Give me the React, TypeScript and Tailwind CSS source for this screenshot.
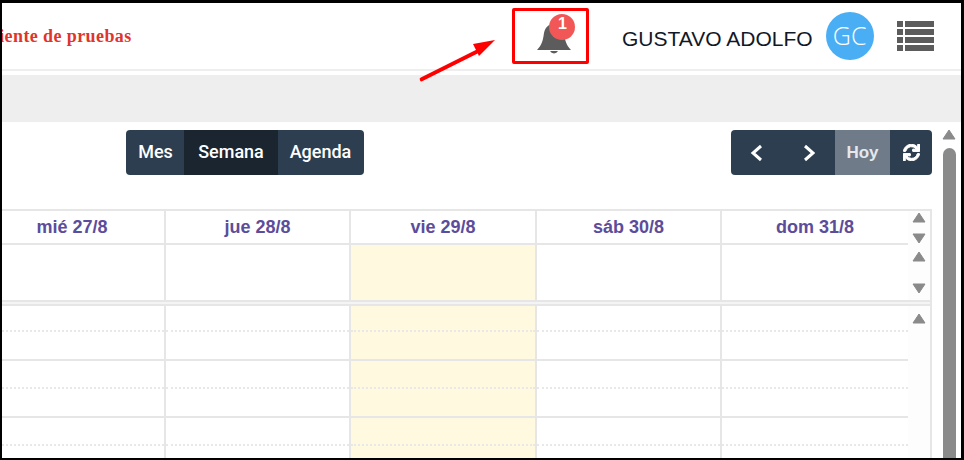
import React from "react";
import { FaSync } from "react-icons/fa";

const days = ["mié 27/8", "jue 28/8", "vie 29/8", "sáb 30/8", "dom 31/8"];
const cols = "grid grid-cols-[162px_185px_186px_185px_188px]";

function Tri({ down = false, className = "" }: { down?: boolean; className?: string }) {
  return (
    <svg width="14" height="11" viewBox="0 0 14 11" className={className}>
      <path d={down ? "M1 1H13L7 10Z" : "M7 1L13 10H1Z"} fill="#8a8a8a" stroke="#8a8a8a" strokeLinejoin="round" />
    </svg>
  );
}

function Chevron({ right = false }: { right?: boolean }) {
  return (
    <svg width="14" height="18" viewBox="0 0 14 18">
      <path d={right ? "M3 2L11 9L3 16" : "M11 2L3 9L11 16"} fill="none" stroke="#fff" strokeWidth="3" />
    </svg>
  );
}

function HourRow({ first = false, last = false }: { first?: boolean; last?: boolean }) {
  return (
    <div className={`${cols} ${first ? "h-[55px]" : "h-[57px]"} shrink-0`}>
      {[0, 1, 2, 3, 4].map((i) => (
        <div
          key={i}
          className={`flex flex-col ${i > 0 ? "border-l-2 border-[#e6e6e6]" : ""} ${i === 2 ? "bg-[#fff9e0]" : "bg-white"}`}
        >
          <div className={`${first ? "h-[26px]" : "h-[28px]"} border-b-2 border-dotted border-[#e8e8e8]`} />
          <div className={`flex-1 ${last ? "" : "border-b-2 border-[#e6e6e6]"}`} />
        </div>
      ))}
    </div>
  );
}

export default function App() {
  return (
    <div className="relative flex h-[460px] w-[964px] flex-col overflow-hidden border-t-[3px] border-b-2 border-l-2 border-r-[3px] border-black bg-white font-['Liberation_Sans',sans-serif]">
      <header className="flex h-[68px] shrink-0 items-center border-b-2 border-[#eeeeee]">
        <div className="w-[132px] shrink-0 overflow-hidden whitespace-nowrap pt-[1px]">
          <span className="-ml-[42px] block whitespace-nowrap font-['Liberation_Serif',serif] text-[18px] font-bold tracking-[0.4px] text-[#e0352b]">
            Ambiente de pruebas
          </span>
        </div>
        <div className="relative ml-[403px] mt-[5px] h-[31px] w-[34px] shrink-0">
          <svg width="34" height="31" viewBox="0 0 34 31" fill="#5c5c5c">
            <path d="M17 1C11 1 8 5 7 10C6 17 5 22 0 27L34 27C29 22 28 17 27 10C26 5 23 1 17 1Z" />
            <path d="M13 28A4.5 4.5 0 0 0 21 28Z" />
          </svg>
          <span className="absolute -top-[9px] left-[12px] flex h-[26px] w-[26px] items-center justify-center rounded-full bg-[#f25757] pb-[7px] pl-[1px] text-[16px] font-bold text-white">
            1
          </span>
        </div>
        <span className="ml-[51px] mt-[5px] text-[21px] text-[#111827]">GUSTAVO ADOLFO</span>
        <div className="ml-[13px] flex h-[48px] w-[48px] items-center justify-center rounded-full bg-[#4aaef5] font-['Open_Sans',sans-serif] text-[25px] font-light text-white">
          GC
        </div>
        <svg width="37" height="30" viewBox="0 0 37 30" className="ml-[23px]" fill="#5c5c5c">
          <rect x="0" y="0" width="6" height="6" />
          <rect x="8" y="0" width="29" height="6" />
          <rect x="0" y="8" width="6" height="6" />
          <rect x="8" y="8" width="29" height="6" />
          <rect x="0" y="16" width="6" height="6" />
          <rect x="8" y="16" width="29" height="6" />
          <rect x="0" y="24" width="6" height="6" />
          <rect x="8" y="24" width="29" height="6" />
        </svg>
      </header>
      <div className="mt-[4px] h-[47px] shrink-0 bg-[#eeeeee]" />
      <div className="flex min-h-0 flex-1">
        <main className="flex w-[930px] shrink-0 flex-col overflow-hidden">
          <div className="mt-[8px] flex h-[45px] shrink-0 items-stretch pl-[124px] pr-0 font-['Roboto',sans-serif] text-[18px] font-medium text-white">
            <div className="flex overflow-hidden rounded-[4px] bg-[#2c3e50] pb-0">
              <span className="flex w-[58px] items-center justify-center pb-[2px] pl-[1px]">Mes</span>
              <span className="flex w-[94px] items-center justify-center bg-[#1a252f] pb-[2px]">Semana</span>
              <span className="flex w-[86px] items-center justify-center pb-[2px] pr-[1px]">Agenda</span>
            </div>
            <div className="ml-[367px] flex overflow-hidden rounded-[4px] bg-[#2c3e50]">
              <span className="flex w-[52px] items-center justify-center"><Chevron /></span>
              <span className="flex w-[52px] items-center justify-center"><Chevron right /></span>
              <span className="flex w-[55px] items-center justify-center bg-[#6f7b89] font-['Liberation_Sans',sans-serif] text-[17px] font-bold text-[#e6e8ea]">Hoy</span>
              <span className="flex w-[42px] items-center justify-center"><FaSync size={17} stroke="#fff" strokeWidth={30} /></span>
            </div>
          </div>
          <div className="mt-[34px] flex min-h-0 flex-1 flex-col overflow-hidden border-r-2 border-t-2 border-[#e6e6e6]">
            <div className="flex h-[34px] shrink-0">
              <div className={`${cols} w-[906px] border-b-2 border-[#e6e6e6]`}>
                {days.map((d, i) => (
                  <div
                    key={d}
                    className={`flex items-center justify-center text-[18px] font-bold text-[#5b4d9b] ${i > 0 ? "border-l-2 border-[#e6e6e6]" : "pr-[22px]"}`}
                  >
                    {d}
                  </div>
                ))}
              </div>
              <div className="flex flex-1 flex-col items-center justify-between bg-[#fdfdfd] pb-[1px] pt-[1px]">
                <Tri />
                <Tri down />
              </div>
            </div>
            <div className="flex h-[55px] shrink-0">
              <div className={`${cols} w-[906px]`}>
                {[0, 1, 2, 3, 4].map((i) => (
                  <div
                    key={i}
                    className={`${i > 0 ? "border-l-2 border-[#e6e6e6]" : ""} ${i === 2 ? "bg-[#fff9e0]" : "bg-white"}`}
                  />
                ))}
              </div>
              <div className="flex flex-1 flex-col items-center justify-between bg-[#fdfdfd] pb-[6px] pt-[6px]">
                <Tri />
                <Tri down />
              </div>
            </div>
            <div className="h-[6px] shrink-0 border-y-2 border-[#e6e6e6] bg-[#f4f4f4]" />
            <div className="flex min-h-0 flex-1">
              <div className="w-[906px] shrink-0">
                <HourRow first />
                <HourRow />
                <HourRow last />
              </div>
              <div className="flex flex-1 justify-center bg-[#fdfdfd] pt-[7px]">
                <Tri />
              </div>
            </div>
          </div>
        </main>
        <aside className="ml-[10px] flex w-[14px] shrink-0 flex-col items-center pt-[7px]">
          <Tri />
          <div className="mt-[8px] w-[13px] flex-1 rounded-t-[7px] bg-[#8a8a8a]" />
        </aside>
      </div>

      <div className="pointer-events-none absolute left-[510px] top-[5px] h-[56px] w-[77px] rounded-[2px] border-[3px] border-[#ff0000]" />
      <svg className="pointer-events-none absolute left-[410px] top-[30px]" width="90" height="55" viewBox="0 0 90 55">
        <path d="M9.7 46.3L64.7 18.7" stroke="#ff0000" strokeWidth="4" strokeLinecap="round" />
        <path d="M83 7L61 11L67 23Z" fill="#ff0000" />
      </svg>
    </div>
  );
}
